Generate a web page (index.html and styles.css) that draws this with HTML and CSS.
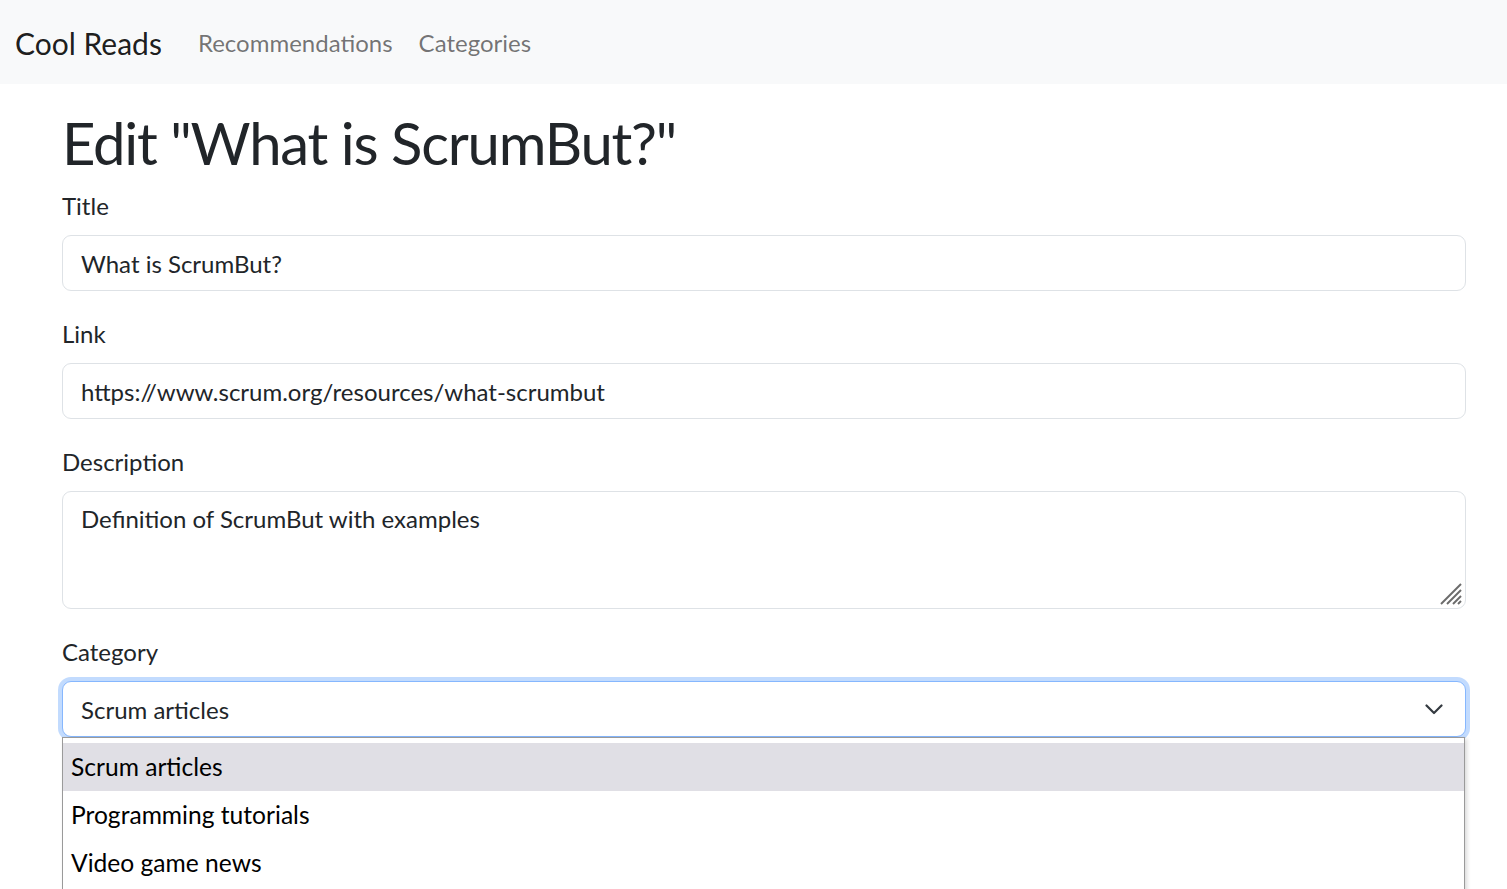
FILE: index.html
```html
<!DOCTYPE html>
<html lang="en">
<head>
<meta charset="utf-8">
<title>Cool Reads</title>
<link rel="stylesheet" href="styles.css">
</head>
<body>
<nav class="navbar">
  <a class="brand" href="#">Cool Reads</a>
  <ul class="nav">
    <li><a class="nav-link" href="#">Recommendations</a></li>
    <li><a class="nav-link" href="#">Categories</a></li>
  </ul>
</nav>
<main class="container">
  <h1 class="page-title">Edit "What is ScrumBut?"</h1>
  <form class="form">
    <div class="field">
      <label class="label">Title</label>
      <div class="control">What is ScrumBut?</div>
    </div>
    <div class="field">
      <label class="label">Link</label>
      <div class="control">https://www.scrum.org/resources/what-scrumbut</div>
    </div>
    <div class="field">
      <label class="label">Description</label>
      <div class="control textarea">Definition of ScrumBut with examples
        <svg class="grip" width="24" height="24" viewBox="0 0 24 24"><g stroke="#6b6b6b" stroke-width="2" stroke-linecap="butt"><line x1="2" y1="22" x2="22" y2="2"/><line x1="8" y1="22" x2="22" y2="8"/><line x1="14" y1="22" x2="22" y2="14"/><line x1="19" y1="22" x2="22" y2="19"/></g></svg>
      </div>
    </div>
    <div class="field">
      <label class="label">Category</label>
      <div class="select-wrap">
        <div class="control select">
          <span>Scrum articles</span>
          <svg class="chevron" width="18" height="11" viewBox="0 0 18 11"><path d="M1.5 1.5L9 9l7.5-7.5" fill="none" stroke="#343a40" stroke-width="2.2" stroke-linecap="round" stroke-linejoin="round"/></svg>
        </div>
        <ul class="dropdown">
          <li class="option active">Scrum articles</li>
          <li class="option">Programming tutorials</li>
          <li class="option">Video game news</li>
        </ul>
      </div>
    </div>
  </form>
</main>
</body>
</html>
```
FILE: styles.css
```css
* { box-sizing: border-box; }
html, body { margin: 0; padding: 0; }
body {
  font-family: "Lato", "Open Sans", sans-serif;
  font-size: 24px;
  line-height: 1.5;
  color: #212529;
  background: #fff;
  overflow: hidden;
  height: 889px;
}
.navbar {
  height: 84px;
  background: #f8f9fa;
  display: flex;
  align-items: center;
  padding: 2px 15px 0 15px;
}
.brand {
  font-size: 30px;
  color: rgba(0,0,0,.9);
  text-decoration: none;
  margin-right: 24px;
}
.nav {
  list-style: none;
  margin: 0;
  padding: 0;
  display: flex;
}
.nav-link {
  display: block;
  padding: 12px;
  color: rgba(0,0,0,.55);
  text-decoration: none;
}
.nav li + li .nav-link { padding-left: 14px; }
.container {
  width: 1404px;
  margin-left: 62px;
  padding-top: 23px;
}
.page-title {
  font-size: 58px;
  letter-spacing: -1.2px;
  font-weight: 400;
  line-height: 72px;
  margin: 0 0 8px 0;
}
.form { margin: 0; }
.field { margin-bottom: 24px; }
.label {
  display: block;
  line-height: 36px;
  padding-top: 1px;
  margin-bottom: 11px;
}
.control {
  height: 56px;
  border: 1px solid #dee2e6;
  border-radius: 9px;
  padding: 1px 18px 0 18px;
  display: flex;
  align-items: center;
  background: #fff;
  color: #212529;
  white-space: nowrap;
}
.textarea {
  height: 118px;
  align-items: flex-start;
  padding-top: 9px;
  position: relative;
}
.grip {
  position: absolute;
  right: 2px;
  bottom: 2px;
}
.select-wrap { position: relative; }
.select {
  justify-content: space-between;
  border-color: #86b7fe;
  box-shadow: 0 0 0 4px rgba(13,110,253,.25);
  padding-right: 22px;
}
.dropdown {
  position: absolute;
  left: 0;
  top: 56px;
  width: 1403px;
  height: 160px;
  margin: 0;
  padding: 5px 0 0 0;
  list-style: none;
  background: #fff;
  border: 1px solid #9a9a9a;
  box-shadow: 2px 2px 4px rgba(0,0,0,.15);
  z-index: 2;
}
.option {
  height: 48px;
  line-height: 48px;
  padding-left: 8px;
  font-size: 24.6px;
  color: #000;
}
.option.active { background: #e0dfe5; }
```
